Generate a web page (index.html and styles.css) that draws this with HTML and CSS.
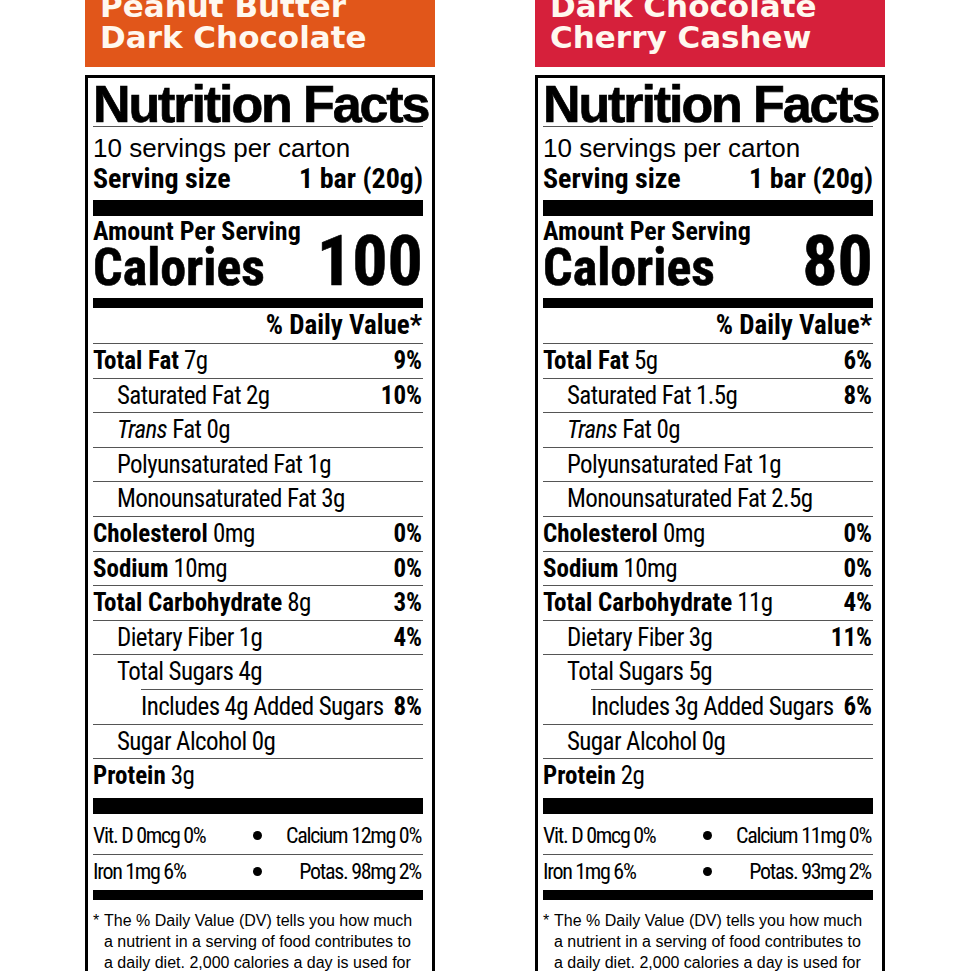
FILE: index.html
```html
<!DOCTYPE html>
<html lang="en">
<head>
<meta charset="utf-8">
<title>Nutrition Facts</title>
<link rel="stylesheet" href="styles.css">
</head>
<body>
<main class="page">
  <section class="label label--orange">
    <header class="banner"><h2 class="banner-title">Peanut Butter<br>Dark Chocolate</h2></header>
    <div class="facts">
      <h1 class="facts-title">Nutrition Facts</h1>
      <p class="servings">10 servings per carton</p>
      <div class="serving-size"><span>Serving size</span><span>1 bar (20g)</span></div>
      <div class="bar bar--thick"></div>
      <p class="amount">Amount Per Serving</p>
      <div class="calories"><span class="calories-label">Calories</span><span class="calories-value">100</span></div>
      <div class="bar bar--medium"></div>
      <div class="dv-head">% Daily Value*</div>
      <ul class="nutrients">
        <li class="row"><span><b>Total Fat</b> 7g</span><b>9%</b></li>
        <li class="row row--indent"><span>Saturated Fat 2g</span><b>10%</b></li>
        <li class="row row--indent"><span><i>Trans</i> Fat 0g</span></li>
        <li class="row row--indent"><span>Polyunsaturated Fat 1g</span></li>
        <li class="row row--indent"><span>Monounsaturated Fat 3g</span></li>
        <li class="row"><span><b>Cholesterol</b> 0mg</span><b>0%</b></li>
        <li class="row"><span><b>Sodium</b> 10mg</span><b>0%</b></li>
        <li class="row"><span><b>Total Carbohydrate</b> 8g</span><b>3%</b></li>
        <li class="row row--indent"><span>Dietary Fiber 1g</span><b>4%</b></li>
        <li class="row row--indent"><span>Total Sugars 4g</span></li>
        <li class="row row--indent2"><span>Includes 4g Added Sugars</span><b>8%</b></li>
        <li class="row row--indent"><span>Sugar Alcohol 0g</span></li>
        <li class="row"><span><b>Protein</b> 3g</span></li>
      </ul>
      <div class="bar bar--thick bar--after-protein"></div>
      <div class="vit-row vit-row--first"><span>Vit. D 0mcg 0%</span><span class="dot"></span><span class="vit-right">Calcium 12mg 0%</span></div>
      <div class="vit-row"><span>Iron 1mg 6%</span><span class="dot"></span><span class="vit-right">Potas. 98mg 2%</span></div>
      <div class="bar bar--medium bar--after-vits"></div>
      <p class="footnote"><span class="ast">*</span>The % Daily Value (DV) tells you how much<br>a nutrient in a serving of food contributes to<br>a daily diet. 2,000 calories a day is used for<br>general nutrition advice.</p>
    </div>
  </section>

  <section class="label label--red">
    <header class="banner"><h2 class="banner-title">Dark Chocolate<br>Cherry Cashew</h2></header>
    <div class="facts">
      <h1 class="facts-title">Nutrition Facts</h1>
      <p class="servings">10 servings per carton</p>
      <div class="serving-size"><span>Serving size</span><span>1 bar (20g)</span></div>
      <div class="bar bar--thick"></div>
      <p class="amount">Amount Per Serving</p>
      <div class="calories"><span class="calories-label">Calories</span><span class="calories-value">80</span></div>
      <div class="bar bar--medium"></div>
      <div class="dv-head">% Daily Value*</div>
      <ul class="nutrients">
        <li class="row"><span><b>Total Fat</b> 5g</span><b>6%</b></li>
        <li class="row row--indent"><span>Saturated Fat 1.5g</span><b>8%</b></li>
        <li class="row row--indent"><span><i>Trans</i> Fat 0g</span></li>
        <li class="row row--indent"><span>Polyunsaturated Fat 1g</span></li>
        <li class="row row--indent"><span>Monounsaturated Fat 2.5g</span></li>
        <li class="row"><span><b>Cholesterol</b> 0mg</span><b>0%</b></li>
        <li class="row"><span><b>Sodium</b> 10mg</span><b>0%</b></li>
        <li class="row"><span><b>Total Carbohydrate</b> 11g</span><b>4%</b></li>
        <li class="row row--indent"><span>Dietary Fiber 3g</span><b>11%</b></li>
        <li class="row row--indent"><span>Total Sugars 5g</span></li>
        <li class="row row--indent2"><span>Includes 3g Added Sugars</span><b>6%</b></li>
        <li class="row row--indent"><span>Sugar Alcohol 0g</span></li>
        <li class="row"><span><b>Protein</b> 2g</span></li>
      </ul>
      <div class="bar bar--thick bar--after-protein"></div>
      <div class="vit-row vit-row--first"><span>Vit. D 0mcg 0%</span><span class="dot"></span><span class="vit-right">Calcium 11mg 0%</span></div>
      <div class="vit-row"><span>Iron 1mg 6%</span><span class="dot"></span><span class="vit-right">Potas. 93mg 2%</span></div>
      <div class="bar bar--medium bar--after-vits"></div>
      <p class="footnote"><span class="ast">*</span>The % Daily Value (DV) tells you how much<br>a nutrient in a serving of food contributes to<br>a daily diet. 2,000 calories a day is used for<br>general nutrition advice.</p>
    </div>
  </section>
</main>
</body>
</html>
```
FILE: styles.css
```css
html, body {
  margin: 0;
  padding: 0;
  background: #ffffff;
  overflow: hidden;
}

.page {
  display: flex;
  justify-content: center;
  gap: 100px;
  color: #000;
  font-family: "Liberation Sans", Arial, sans-serif;
}

.label {
  width: 350px;
  flex: none;
}

.label--orange { --accent: #e1561a; }
.label--red { --accent: #d6203b; }

.banner {
  box-sizing: border-box;
  height: 67px;
  overflow: hidden;
  display: flex;
  flex-direction: column;
  justify-content: flex-end;
  padding: 0 0 14px 15px;
  background: var(--accent);
}

.banner-title {
  margin: 0;
  font-family: "DejaVu Sans", "Liberation Sans", sans-serif;
  font-weight: bold;
  font-size: 31px;
  line-height: 31px;
  color: #fff8ef;
  white-space: nowrap;
}

.facts {
  margin-top: 8px;
  border: 3px solid #000;
  padding: 0 9px 0 5px;
}

.facts-title {
  margin: 4px 0 0;
  font-family: "Liberation Sans", Arial, sans-serif;
  font-weight: bold;
  font-size: 52px;
  line-height: 44px;
  letter-spacing: -2.1px;
  -webkit-text-stroke: 0.7px #000;
  white-space: nowrap;
  border-bottom: 1px solid #555;
}

.servings {
  margin: 6px 0 0;
  font-size: 26px;
  line-height: 30px;
}

.serving-size,
.amount,
.calories,
.dv-head,
.row,
.vit-row {
  font-family: "Roboto Condensed", "Roboto", sans-serif;
  font-stretch: 75%;
}

.serving-size {
  display: flex;
  justify-content: space-between;
  font-weight: bold;
  font-size: 28px;
  line-height: 31px;
}

.bar {
  background: #000;
}

.bar--thick {
  height: 16px;
  margin-top: 6px;
}

.bar--medium {
  height: 10px;
  margin-top: 7px;
}

.bar--after-protein {
  margin-top: 5px;
}

.bar--after-vits {
  margin-top: 1px;
}

.amount {
  margin: 2px 0 0;
  font-weight: bold;
  font-size: 26px;
  line-height: 26px;
}

.calories {
  display: flex;
  justify-content: space-between;
  align-items: baseline;
  font-weight: bold;
  -webkit-text-stroke: 0.6px #000;
}

.calories-label {
  font-size: 52px;
  line-height: 46px;
}

.calories-value {
  font-size: 70px;
  line-height: 34px;
}

.dv-head {
  text-align: right;
  font-weight: bold;
  font-size: 27px;
  line-height: 35px;
  padding-right: 1px;
}

.nutrients {
  list-style: none;
  margin: 0;
  padding: 0;
}

.row {
  display: flex;
  justify-content: space-between;
  height: 33.6px;
  border-top: 1px solid #555;
  font-size: 25px;
  line-height: 33.6px;
  letter-spacing: -0.6px;
  padding-right: 1px;
  white-space: nowrap;
}

.row b {
  font-weight: bold;
  letter-spacing: 0;
}

.row--indent {
  padding-left: 24px;
}

.row--indent2 {
  margin-left: 48px;
}

.vit-row {
  display: grid;
  grid-template-columns: 1fr auto 1fr;
  align-items: center;
  font-size: 22px;
  line-height: 34px;
  letter-spacing: -1.3px;
  white-space: nowrap;
  padding-right: 2px;
}

.vit-row--first {
  padding-top: 4px;
  line-height: 36px;
  border-bottom: 1px solid #555;
}

.vit-right {
  text-align: right;
}

.dot {
  width: 9px;
  height: 9px;
  border-radius: 50%;
  background: #000;
}

.footnote {
  margin: 0;
  padding: 10px 0 0 11px;
  text-indent: -11px;
  font-size: 16px;
  line-height: 21px;
  white-space: nowrap;
}

.ast {
  display: inline-block;
  width: 11px;
  text-indent: 0;
}
```
